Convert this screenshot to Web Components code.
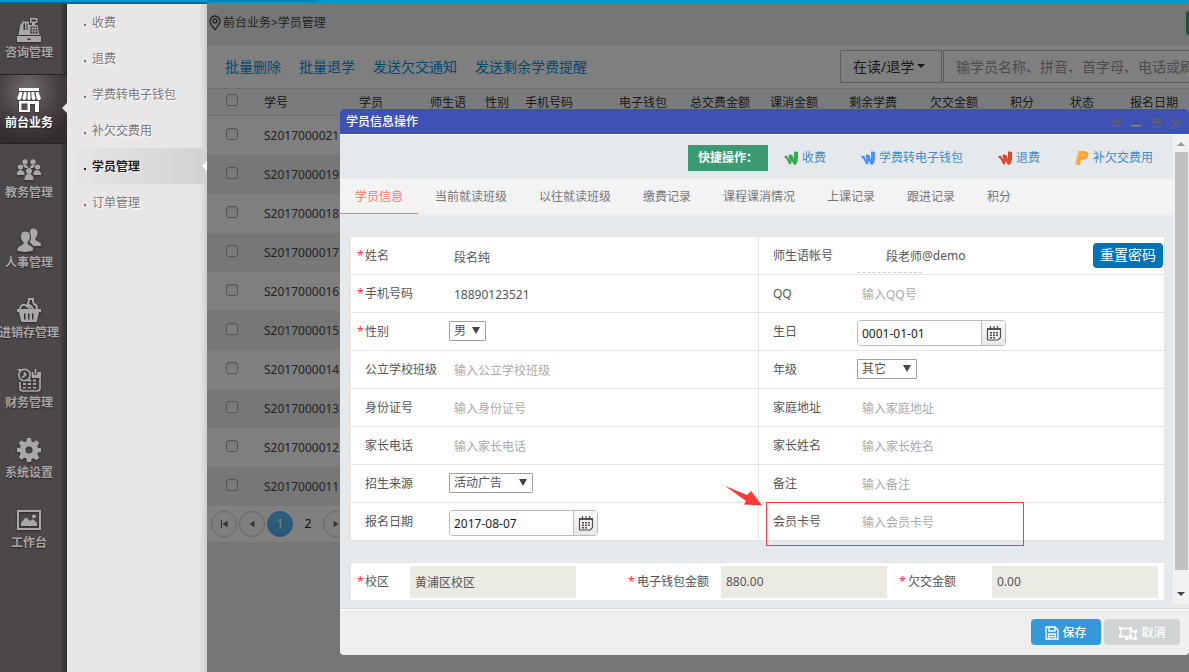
<!DOCTYPE html>
<html lang="zh-CN">
<head>
<meta charset="utf-8">
<title>学员管理</title>
<style>
html, body { height: 100%; }
body { margin: 0; overflow: hidden; font: 12px/20px "Noto Sans", "Noto Sans CJK SC", sans-serif; color: #333; background: #eaecee; }
</style>
</head>
<body>
<school-app></school-app>
<script>
const define = (name, css, html, ready) => {
  const template = document.createElement('template');
  customElements.define(name, class extends HTMLElement {
    connectedCallback() {
      if (this.shadowRoot) return;
      const root = this.attachShadow({ mode: 'open' });
      template.innerHTML = `<style>*{box-sizing:border-box}${css}</style>` + (typeof html === 'function' ? html(this) : html);
      root.append(template.content.cloneNode(true));
      if (ready) ready(this, root);
    }
  });
};

const ICONS = {
  register: ['0 0 24 24', '<path fill-rule="evenodd" d="M13 0h7.500v5H18v2h2.500l2 10H1.500l2-11.500H5V3.500h7V7h3V5h-2zM14.500 1.500v2H19v-2zM6.500 5.500V12H8V5.500zM9.500 5.500V12h1V5.500zM13.500 8.500v7h7.300l-1-7zM0 18h24v6H0zM10.500 20.500V22h3v-1.500z"/><path d="M14 10.500h6M14 13h6.500M15.800 8.500v7M18.200 8.500v7" fill="none" stroke="currentColor" stroke-width=".9"/>'],
  shop: ['0 0 24 24', '<path fill-rule="evenodd" d="M2 0h20v3H2zM2.500 4h3L4.400 10.500Q2 14 0 10.500zM7 4h2.700L9.300 10.500Q7.300 14 5.400 10.500zM11 4h2l.7 6.500Q12 14 10.300 10.500zM14.300 4H17l1.600 6.500Q16.700 14 14.700 10.500zM18.500 4h3L24 10.500Q22 14 19.600 10.500zM2 13h20v11h-4v-8h-5v8H2zM4.500 15.500V22h6v-6.500z"/>'],
  group: ['0 0 24 24', '<circle cx="8" cy="4" r="2.700"/><circle cx="16" cy="4" r="2.700"/><circle cx="3.500" cy="9" r="2.600"/><circle cx="20.500" cy="9" r="2.600"/><circle cx="12" cy="13" r="3"/><path d="M5.500 7h4l2 3H8zM18.500 7h-4l-2 3H16zM0 17v-2q1-3 3.500-3T7.500 15v2zM16.500 17v-2q1-3 3.500-3t4 3v2zM7.500 22v-2q1-4 4.500-4t4.500 4v2z"/>'],
  people: ['0 0 24 24', '<path d="M14 1q5-2 6.500 3 .5 4-2 6v2l5 3q1 2 0 3h-7l-4-4q3-5 0-9z"/><path d="M8 3q5 0 5.500 5 0 4-2.500 6v2l5 3q1 2 0 4-8 3-16 0-.5-3 1-4l5-3v-2Q3.500 12 3.500 8 4 3 8 3z" stroke="#4c4748"/>'],
  basket: ['0 0 24 24', '<path fill-rule="evenodd" d="M0 11h24v3h-2l-2 9q-.3 1-1 1H5q-1 0-1-1l-2-9H0zM7 15.500v6h1.500v-6zM11 15.500v6h1.500v-6zM15 15.500v6h1.500v-6z"/><path d="M3 11q1-5 5-4 3 0 5 4M9 9q3-5 7 2M11 7V5l1-1.500V1h4v2.500L17 6q3 1 3 5" fill="none" stroke="currentColor" stroke-width="2"/>'],
  finance: ['0 0 24 24', '<circle cx="7.500" cy="7" r="5.700" fill="none" stroke="currentColor" stroke-width="1.700"/><path d="M7.500 4v4L5 9.500M7.500 8l2-2M18.500 1v5M3 14v6q0 3 3 3h14q3 0 3-3V6" fill="none" stroke="currentColor" stroke-width="1.700"/><path d="M0 1h4v4z"/><path d="M14.500 4h2v2q2 2 4 0V4H24v6h-9zM6 15h3v2H6zM11 15h3v2h-3zM16 15h3v2h-3zM11 11.500h3v2h-3zM16 11.500h3v2h-3zM6 19h3v1.500H6zM11 19h3v1.500h-3zM16 19h3v1.500h-3z"/>'],
  gear: ['0 0 24 24', '<path fill-rule="evenodd" d="M10 0h4l.6 3.400 2 .8 2.900-2 2.800 2.800-2 2.900.8 2 2.900.1v4l-2.900.6-.8 2 2 2.900-2.800 2.800-2.900-2-2 .8L14 24h-4l-.6-3.400-2-.8-2.900 2L1.700 19l2-2.900-.8-2L0 14v-4l2.900-.1.8-2-2-2.900L4.500 2.200l2.900 2 2-.8zM12 8.500a3.500 3.500 0 100 7 3.500 3.500 0 000-7z"/>'],
  image: ['0 0 24 24', '<path fill-rule="evenodd" d="M0 2h24v20H0zM2 4v16h20V4z"/><circle cx="17" cy="8.500" r="2"/><path d="M4 18v-3l4-5q1-1 2 0l3 3 2-1.500q1-.5 2 .5l3 3v3z"/>'],
  pin: ['0 0 12 16', '<g fill="none" stroke="currentColor" stroke-width="1.300"><path d="M6 14.500Q1 9 1 6a5 5 0 0110 0q0 3-5 8.500z"/><circle cx="6" cy="6" r="2"/></g>'],
  wallet: ['0 0 14 14', '<path d="M0 5.500Q2 4 3.500 5.500l2 4L4.500 4Q7 3 8.500 4.500l1.500 4V.500Q12 .2 14 1v6q0 4-2.500 7L9.500 13.500 7.800 9.500 7 13.500 5 13Q3 8 0 5.500z"/>'],
  paypal: ['0 0 14 14', '<path d="M3 0h6q5 .5 4 4.500-1 4.500-6 4.500H5l-1 4.500H0z" opacity=".75"/><path fill-rule="evenodd" d="M4.500 0H9q5 .5 4 4.500-1 4-6 4.500H6l-1 5H2zM6.500 3L6 6h2q2-.2 2-2 0-1-1.500-1z"/>'],
  pushpin: ['0 0 12 12', '<path d="M0 6h4M4 3v6M4 4h6v4H4M10 2.500v7" fill="none" stroke="currentColor" stroke-width="1.300"/>'],
  minimise: ['0 0 12 12', '<rect x="1" y="7.500" width="10" height="2.500" rx="1" fill="#8287b8"/><rect x="1" y="7" width="10" height="2" rx="1"/>'],
  maximise: ['0 0 12 12', '<rect x="1.500" y="2" width="9" height="8" rx="1.500" fill="none" stroke="currentColor" stroke-width="1.200"/><path d="M1 4.500h10" stroke="currentColor" stroke-width="1.500"/>'],
  close: ['0 0 12 12', '<path d="M2 2l8 8M10 2l-8 8" fill="none" stroke="currentColor" stroke-width="1.500"/>'],
  calendar: ['0 0 16 16', '<path d="M4.500 1v3M8 1v3M11.500 1v3M1.500 3.500h13v9l-2.500 2.500H1.500zM1.500 4.500h13" fill="none" stroke="currentColor" stroke-width="1.200"/><path d="M4 7h2v1.500H4zM7 7h2v1.500H7zM10 7h2v1.500h-2zM4 9.500h2V11H4zM7 9.500h2V11H7zM10 9.500h2V11h-2zM4 12h2v1.500H4zM7 12h2v1.500H7z"/>'],
  save: ['0 0 14 14', '<path d="M1 1h9l3 3v9H1zM4 1v4h6V1M3.500 13V8h7v5M4 10.500h6" fill="none" stroke="currentColor" stroke-width="1.300"/>'],
  cancel: ['0 0 20 16', '<path d="M2.500 3.500h10v8h-10zM13 6.500h4.500v7H8.500v-2" fill="none" stroke="currentColor" stroke-width="1.300"/><path d="M1 2h3v3H1zM11 2h3v3h-3zM1 10h3v3H1zM11 10h3v3h-3zM16 5h3v3h-3zM16 12h3v3h-3zM7 12h3v3H7z"/>'],
  first: ['0 0 10 10', '<path d="M1 0h1.500v10H1zM9.500 1v8L3 5z"/>'],
  prev: ['0 0 10 10', '<path d="M8 1v8L2 5z"/>'],
  next: ['0 0 10 10', '<path d="M2 1v8l6-4z"/>']
};
define('app-icon', ':host{display:inline-block;width:14px;height:14px;flex:none}svg{display:block;width:100%;height:100%;fill:currentColor}',
  el => { const [box, body] = ICONS[el.getAttribute('name')]; return `<svg viewBox="${box}" aria-hidden="true">${body}</svg>`; });

define('nav-item', `
:host{display:block;position:relative;height:70px;color:#a9a7a7}
:host([active]){color:#fff;background:radial-gradient(circle at 28px 16px,#777071 0,#4a4344 28px,#332c2d 52px);border-top:1px solid #262122;border-bottom:1px solid #262122}
a{display:flex;flex-direction:column;align-items:center;width:58px;height:100%;padding-top:14px;gap:1px;color:inherit;text-decoration:none;font-weight:bold;white-space:nowrap;text-shadow:0 1px 1px #0008}
:host([active]) a{padding-top:13px}
app-icon{width:24px;height:24px;filter:drop-shadow(0 1px 1px #0007)}
:host([active])::after{content:"";position:absolute;right:0;top:28px;border:5px solid transparent;border-left:0;border-right-color:#e8e6e7}
`, el => `<a href="#"><app-icon name="${el.getAttribute('icon')}"></app-icon><slot></slot></a>`);

define('side-nav', `:host{display:block;background:linear-gradient(to right,#0000 60px,#0006 67px),#4c4748}`, `
<nav>
<nav-item icon="register">咨询管理</nav-item><nav-item icon="shop" active>前台业务</nav-item>
<nav-item icon="group">教务管理</nav-item><nav-item icon="people">人事管理</nav-item>
<nav-item icon="basket">进销存管理</nav-item><nav-item icon="finance">财务管理</nav-item>
<nav-item icon="gear">系统设置</nav-item><nav-item icon="image">工作台</nav-item>
</nav>`);

define('sub-item', `
:host{display:block;position:relative;color:#777}
:host([active]){color:#222;font-weight:bold;background:linear-gradient(to right,#0000,#d2d2d2)}
a{display:flex;align-items:center;gap:6px;height:36px;padding:2px 0 0 17px;color:inherit;text-decoration:none;text-shadow:1px 1px #fff}
a::before{content:"";width:2px;height:2px;margin-top:4px;background:currentColor}
:host([active])::after{content:"";position:absolute;right:0;top:13px;border:5px solid transparent;border-left:0;border-right-color:#fff}
`, '<a href="#"><slot></slot></a>');

define('sub-nav', `:host{display:block;background:linear-gradient(to left,#cccfce,#0000 8px),#e8e6e7}`, `
<nav><sub-item>收费</sub-item><sub-item>退费</sub-item><sub-item>学费转电子钱包</sub-item>
<sub-item>补欠交费用</sub-item><sub-item active>学员管理</sub-item><sub-item>订单管理</sub-item></nav>`);

define('page-crumbs', `
:host{display:flex;align-items:center;height:41px;padding:0 0 3px 2px;gap:2px;color:#444}
app-icon{width:12px;height:16px}
button{margin-left:auto;width:3px;height:24px;padding:0;border:0;border-radius:4px 0 0 4px;background:#3fa37a}
`, `<app-icon name="pin"></app-icon><span>前台业务&gt;学员管理</span><button type="button" aria-label="新增"></button>`);

define('page-toolbar', `
:host{display:flex;align-items:center;height:43px;padding-left:18px;gap:18px;font-size:14px}
a{color:#0094e4;text-decoration:none}
form{display:flex;gap:1px;width:349px;margin-left:auto}
select,input{height:33px;border:1px solid #bbb;background:#fff;font:inherit;color:#333;border-radius:0;margin:0}
.pick{position:relative}
.pick::after{content:"";position:absolute;right:17px;top:14px;border:4px solid transparent;border-bottom:0;border-top-color:#333}
select{appearance:none;width:102px;padding:0 12px}
input{flex:1;min-width:0;padding:0 0 0 12px;border-right:0}
input::placeholder{color:#999}
`, `<a href="#">批量删除</a><a href="#">批量退学</a><a href="#">发送欠交通知</a><a href="#">发送剩余学费提醒</a>
<form><div class="pick"><select aria-label="状态"><option>在读/退学</option></select></div><input aria-label="搜索学员" placeholder="输学员名称、拼音、首字母、电话或刷卡"></form>`);

const COLS = [['', 57], ['学号', 95], ['学员', 71], ['师生语', 55], ['性别', 40], ['手机号码', 94], ['电子钱包', 71], ['总交费金额', 80], ['课消金额', 79], ['剩余学费', 81], ['欠交金额', 80], ['积分', 60], ['状态', 60], ['报名日期', 59]];
const IDS = [21, 19, 18, 17, 16, 15, 14, 13, 12, 11];
define('student-table', `
:host{display:block}
table{width:100%;table-layout:fixed;border-collapse:separate;border-spacing:0}
th,td{padding:0;text-align:left;font-weight:normal;white-space:nowrap;color:#444}
th{height:28px;padding-top:2px;border:solid #ddd;border-width:1px 0;background:#f4f7fb;color:#333}
td{height:39px}
tbody tr:nth-child(even) td{background:#efefef}
.check{padding:0 0 4px 19px}
input{appearance:none;display:block;width:12px;height:12px;margin:0;border:1px solid #aaa;border-radius:3px;background:linear-gradient(#eee,#fff)}
`, `<table><colgroup>${COLS.map(c => `<col style="width:${c[1]}px">`).join('')}</colgroup>
<thead><tr><th class="check"><input type="checkbox" aria-label="全选"></th>${COLS.slice(1).map(c => `<th>${c[0]}</th>`).join('')}</tr></thead>
<tbody>${IDS.map(n => `<tr><td class="check"><input type="checkbox" aria-label="选择"></td><td>S20170000${n}</td><td colspan="12"></td></tr>`).join('')}</tbody></table>`);

define('page-pager', `
:host{display:flex;align-items:center;height:36px;padding-left:4px;gap:2px}
button{width:26px;height:26px;padding:0;border:1px solid #ccc;border-radius:50%;background:#fff;font:inherit;color:#666;display:grid;place-items:center}
button.on{background:linear-gradient(#5ec4ff,#4aaee8);border-color:#4aaee8;color:#fff}
button.plain{border-color:transparent;color:#222}
app-icon{width:8px;height:8px}
`, `<button type="button" aria-label="首页"><app-icon name="first"></app-icon></button><button type="button" aria-label="上一页"><app-icon name="prev"></app-icon></button><button type="button" class="on">1</button><button type="button" class="plain">2</button><button type="button" aria-label="下一页"><app-icon name="next"></app-icon></button>`);

define('student-page', `
:host{display:block;position:relative;min-width:0;overflow:hidden;background:#eaecee}
.panel{background:#fff;border-radius:4px 0 0 4px}
.shade{position:absolute;inset:0;background:#00000080}
`, `<page-crumbs></page-crumbs><div class="panel"><page-toolbar></page-toolbar><student-table></student-table><page-pager></page-pager></div><div class="shade"></div>`);

/* One labelled field of the form: kind is text, select, date or account. */
define('form-field', `
:host{display:flex;align-items:center;position:relative;height:37px;background:#fff;color:#555}
label{position:relative;width:98px;padding-left:14px;flex:none}
:host([required]) label::before{content:"*";position:absolute;left:6px;color:#f33}
input,select{font:inherit;color:#555;margin:0;background:#fff;border:0;outline:0}
input{height:26px;padding:0 5px;min-width:0}
input.text{width:200px;height:28px;padding-top:2px}
input::placeholder{color:#aaa}
.pick{position:relative;margin-bottom:1px}
.pick::after{content:"";position:absolute;right:6px;top:6px;border:4px solid transparent;border-top:7px solid #444;border-bottom:0}
select{display:block;appearance:none;height:20px;padding:0 4px;border:1px solid #a0a0a0;border-radius:1px;line-height:18px}
.date{display:flex;width:149px;height:26px;margin-top:3px;border:1px solid #bbb;border-radius:4px;overflow:hidden}
.date input{flex:1;height:24px;padding:0 4px;color:#222}
.date button{width:24px;padding:0;border:0;border-left:1px solid #bbb;background:linear-gradient(#fafafa,#e8e8e8);color:#554f4d;display:grid;place-items:center}
.date app-icon{width:16px;height:16px}
.account{width:65px;height:34px;padding:2px 0 0;text-align:right;border-bottom:1px dashed #ccc}
`, el => {
  const a = n => el.getAttribute(n) || '';
  const kind = a('kind') || 'text';
  const body = {
    text: `<input class="text" id="f" value="${a('value')}" placeholder="${a('placeholder')}">`,
    select: `<div class="pick"><select id="f" style="width:${a('size')}px"><option>${a('value')}</option></select></div>`,
    date: `<div class="date"><input id="f" value="${a('value')}"><button type="button" aria-label="选择日期"><app-icon name="calendar"></app-icon></button></div>`,
    account: `<input class="account" id="f" value="${a('value')}"><span>@demo</span>`
  }[kind];
  return `<label for="f">${a('label')}</label>${body}<slot></slot>`;
});

define('total-field', `
:host{display:flex;align-items:center;height:37px;color:#555;white-space:nowrap}
label{position:relative;width:99px;padding-left:15px;flex:none}
:host([narrow]) label{width:59px;padding-left:14px}
label::before{content:"*";position:absolute;left:6px;color:#f33}
input{width:166px;height:32px;padding:0 5px;border:0;background:#ebebe4;color:#555;font:inherit;margin:0}
`, el => `<label for="f">${el.getAttribute('label')}</label><input id="f" readonly value="${el.getAttribute('value')}">`);

define('mark-callout', `
:host{position:absolute;left:7px;top:-1px;width:258px;height:44px;border:1px solid #f93b3b;pointer-events:none}
svg{position:absolute;left:-42px;top:-17px;width:40px;height:24px;fill:#fb3b35}
`, `<svg viewBox="0 0 40 24" aria-hidden="true"><path d="M0 0L22 9 26 5 37 19.500 19 18.500 21 15z"/></svg>`);

define('student-form', `
:host{display:block;padding:20px 8px 7px 10px;background:#e5e9ec}
.grid{display:grid;grid-template-columns:minmax(0,407fr) minmax(0,405fr);gap:1px;padding:1px;background:#e4e4e4}
.totals{display:grid;grid-template-columns:repeat(3,1fr);margin-top:21px;background:#fff;border:1px solid #e4e4e4}
.reset{margin:0 1px 0 auto;height:25px;width:70px;padding:0 0 2px;border:0;border-radius:4px;background:#0174b8;color:#fff;font-family:inherit;font-size:14px;line-height:20px;white-space:nowrap}
`, `<form><div class="grid">
<form-field label="姓名" required value="段名纯"></form-field>
<form-field label="师生语帐号" kind="account" value="段老师"><button class="reset" type="button">重置密码</button></form-field>
<form-field label="手机号码" required value="18890123521"></form-field>
<form-field label="QQ" placeholder="输入QQ号"></form-field>
<form-field label="性别" required kind="select" size="37" value="男"></form-field>
<form-field label="生日" kind="date" value="0001-01-01"></form-field>
<form-field label="公立学校班级" placeholder="输入公立学校班级"></form-field>
<form-field label="年级" kind="select" size="60" value="其它"></form-field>
<form-field label="身份证号" placeholder="输入身份证号"></form-field>
<form-field label="家庭地址" placeholder="输入家庭地址"></form-field>
<form-field label="家长电话" placeholder="输入家长电话"></form-field>
<form-field label="家长姓名" placeholder="输入家长姓名"></form-field>
<form-field label="招生来源" kind="select" size="84" value="活动广告"></form-field>
<form-field label="备注" placeholder="输入备注"></form-field>
<form-field label="报名日期" kind="date" value="2017-08-07"></form-field>
<form-field label="会员卡号" placeholder="输入会员卡号"><mark-callout></mark-callout></form-field>
</div><div class="totals">
<total-field narrow label="校区" value="黄浦区校区"></total-field>
<total-field label="电子钱包金额" value="880.00"></total-field>
<total-field label="欠交金额" value="0.00"></total-field>
</div></form>`);

define('quick-bar', `
:host{display:flex;align-items:center;justify-content:flex-end;height:44px;padding:2px 20px 0 0;gap:35px;background:#e5e9ec}
.first{display:flex;align-items:center;gap:16px}
b{width:80px;height:26px;padding:3px 0 0 10px;background:#3b9a72;color:#fff;white-space:nowrap}
a{display:flex;align-items:center;gap:4px;color:#428bca;text-decoration:none}
`, `<div class="first"><b>快捷操作：</b><a href="#"><app-icon name="wallet" style="color:#34a94b"></app-icon>收费</a></div>
<a href="#"><app-icon name="wallet" style="color:#4c8dff"></app-icon>学费转电子钱包</a>
<a href="#"><app-icon name="wallet" style="color:#dc4632"></app-icon>退费</a>
<a href="#"><app-icon name="paypal" style="color:#ffa42e"></app-icon>补欠交费用</a>`);

define('tab-bar', `
:host{display:flex;gap:2px;height:37px;background:#f3f3f3;border-bottom:2px solid #ebecec}
a{height:35px;padding:8px 15px 0;color:#777;text-decoration:none;white-space:nowrap}
a.on{color:#ff7a5c;border-bottom:1px solid #ff7a5c}
`, `<a class="on" href="#">学员信息</a><a href="#">当前就读班级</a><a href="#">以往就读班级</a><a href="#">缴费记录</a><a href="#">课程课消情况</a><a href="#">上课记录</a><a href="#">跟进记录</a><a href="#">积分</a>`);

define('scroll-rail', `
:host{display:flex;flex-direction:column;width:16px;margin-bottom:4px;background:#f1f1f1}
i{height:17px;display:grid;place-items:center;flex:none}
i::before{content:"";border:4px solid transparent;border-top:0;border-bottom-color:#999}
div{flex:1;margin:0 1px 0 2px;background:#c1c1c1}
i:last-child{height:34px}
i:last-child::before{margin-top:14px;border-top:4px solid #444;border-bottom:0}
`, '<i></i><div></div><i></i>');

define('student-dialog', `
:host{position:absolute;left:340px;right:0;top:109px;background:#efefef;border-radius:4px;overflow:hidden}
header{display:flex;align-items:center;gap:8px;height:25px;padding:0 7px 0 6px;background:#3f51b5;color:#fff}
h2{margin:0 auto 0 0;font:inherit;font-weight:500}
header button{width:12px;height:12px;padding:0;border:0;background:none;color:#5b5560}
header app-icon{width:12px;height:12px;display:block;filter:drop-shadow(0 1px #8287b866)}
.body{display:flex;border-top:1px solid #fff;background:#e5e9ec;border-bottom:1px solid #d8d8d8}
main{flex:1;min-width:0}
footer{display:flex;justify-content:flex-end;gap:3px;padding:9px 9px 10px;border-top:1px solid #fff}
footer button{display:flex;align-items:center;justify-content:center;gap:3px;width:70px;height:26px;padding:2px 0 0;border:0;border-radius:4px;background:#3498db;color:#fff;font:inherit;font-weight:500}
footer button.off{width:76px;background:#d0d4d5}
.off app-icon{width:20px;height:16px}
`, `<header><h2>学员信息操作</h2><button type="button" aria-label="固定"><app-icon name="pushpin"></app-icon></button><button type="button" aria-label="最小化"><app-icon name="minimise"></app-icon></button><button type="button" aria-label="最大化"><app-icon name="maximise"></app-icon></button><button type="button" aria-label="关闭"><app-icon name="close"></app-icon></button></header>
<div class="body"><main><quick-bar></quick-bar><tab-bar></tab-bar><student-form></student-form></main><scroll-rail></scroll-rail></div>
<footer><button type="button"><app-icon name="save"></app-icon>保存</button><button type="button" class="off"><app-icon name="cancel"></app-icon>取消</button></footer>`);

define('school-app', `
:host{display:grid;grid-template-columns:67px 140px minmax(0,1fr);grid-template-rows:4px 1fr;min-height:100vh;position:relative}
.top{grid-column:1/-1;display:grid;grid-template-columns:207px 111px 1fr;background:#0099d0}
.top i:first-child{margin-top:2px;background:#006490}
.top i:last-child{height:2px;background:#0284b8}
`, `<div class="top"><i></i><i></i></div><side-nav></side-nav><sub-nav></sub-nav><student-page></student-page><student-dialog></student-dialog>`);
</script>
</body>
</html>
